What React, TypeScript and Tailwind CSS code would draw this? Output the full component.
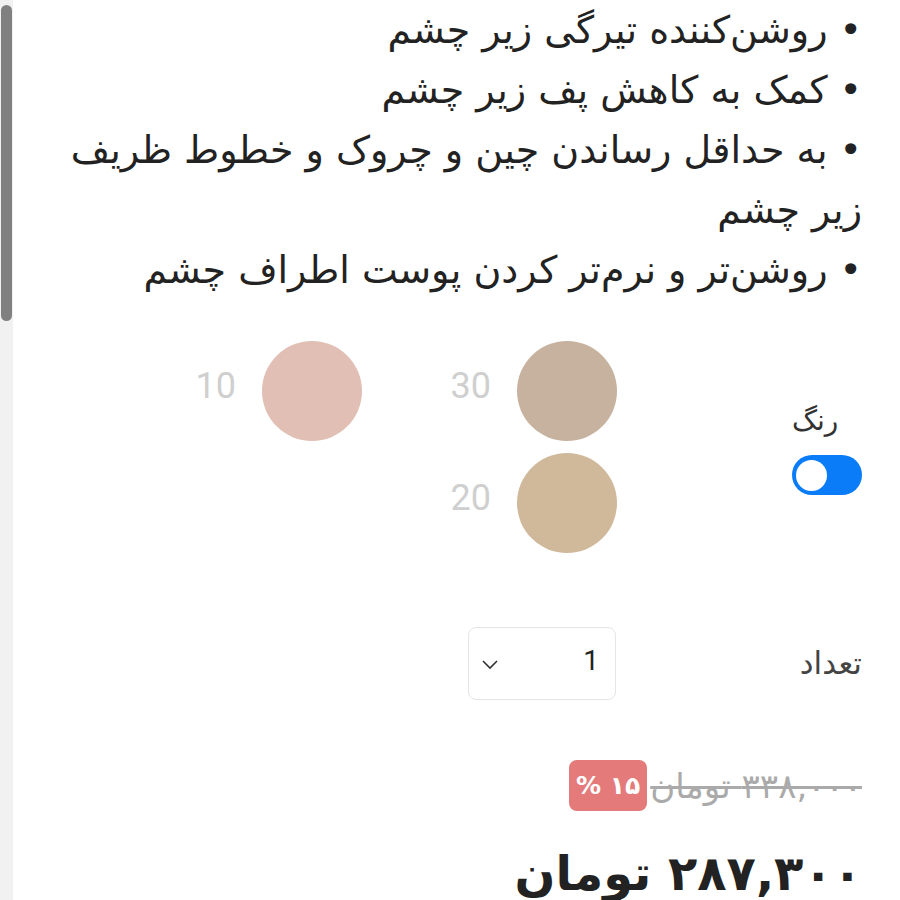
import React, { useState } from 'react';

const bullets = [
  'روشن‌کننده تیرگی زیر چشم',
  'کمک به کاهش پف زیر چشم',
  'به حداقل رساندن چین و چروک و خطوط ظریف زیر چشم',
  'روشن‌تر و نرم‌تر کردن پوست اطراف چشم',
];

const shades = [
  { code: '30', color: '#c7b29f' },
  { code: '10', color: '#e1bfb4' },
  { code: '20', color: '#d0b99b' },
];

const App: React.FC = () => {
  const [colorOn, setColorOn] = useState(true);
  const [qty, setQty] = useState('1');

  return (
    <div dir="rtl" className="relative min-h-[900px] bg-white overflow-hidden" style={{ fontFamily: '"DejaVu Sans", "Noto Sans", sans-serif' }}>
      {/* scrollbar */}
      <div className="fixed left-0 top-0 h-[900px] w-[13px] bg-[#f1f1f1]">
        <div className="mx-auto mt-[5px] h-[316px] w-[11px] rounded-full bg-[#808080]" />
      </div>

      <div className="pr-[38px] pl-[70px]">
        <ul className="text-[38px] leading-[60px] text-[#222]">
          {bullets.map(b => (
            <li key={b}>• {b}</li>
          ))}
        </ul>

        {/* رنگ */}
        <div className="mt-[41px] flex items-start">
          <div className="flex w-[70px] flex-col items-end pt-[62px]">
            <span className="text-[28px] leading-[36px] text-[#333]">رنگ</span>
            <button
              onClick={() => setColorOn(!colorOn)}
              className={`mt-[16px] flex h-[40px] w-[70px] items-center rounded-full px-[4px] ${colorOn ? 'justify-end bg-[#0a7cf7]' : 'justify-start bg-gray-300'}`}
            >
              <span className="h-[31px] w-[31px] rounded-full bg-white" />
            </button>
          </div>
          <div className="mr-[175px] grid grid-cols-[255px_168px] gap-y-[12px]">
            {shades.map(s => (
              <div key={s.code} className="flex items-center gap-[26px]">
                <div className="h-[100px] w-[100px] rounded-full" style={{ backgroundColor: s.color }} />
                <span className="-mt-[10px] text-[36px] text-[#cfcfcf]" style={{ fontFamily: 'Roboto, sans-serif' }}>{s.code}</span>
              </div>
            ))}
          </div>
        </div>

        {/* تعداد */}
        <div className="mt-[74px] flex items-center">
          <span className="w-[246px] text-[31px] text-[#444]">تعداد</span>
          <div className="flex h-[73px] w-[148px] items-center justify-between rounded-[8px] border border-[#e6e6e6] pr-[16px] pl-[12px]">
            <span className="-mt-[6px] text-[28px] text-[#222]" style={{ fontFamily: 'Roboto, sans-serif' }}>{qty}</span>
            <svg width="18" height="12" viewBox="0 0 18 12" fill="none" stroke="#333" strokeWidth="1.6" onClick={() => setQty(qty)}>
              <path d="M2 3l7 7 7-7" />
            </svg>
          </div>
        </div>

        {/* قیمت */}
        <div className="mt-[60px] flex items-center gap-[3px]">
          <span className="text-[34px] leading-[40px] text-[#aaa] line-through">۳۳۸,۰۰۰ تومان</span>
          <span dir="ltr" className="flex h-[51px] w-[78px] items-center justify-center rounded-[8px] bg-[#e47a7a] text-[25px] font-bold text-white">% ۱۵</span>
        </div>
        <div className="mt-[32px] text-[48px] font-bold leading-[60px] text-[#222]">۲۸۷,۳۰۰ تومان</div>
      </div>
    </div>
  );
};

export default App;
